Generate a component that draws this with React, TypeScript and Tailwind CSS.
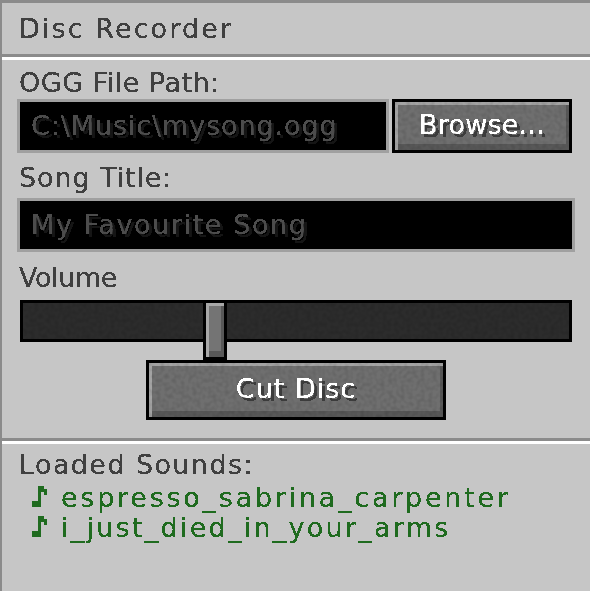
const font = "font-['DejaVu_Sans',sans-serif] text-[27px] leading-[30px] whitespace-pre [filter:url(#crisp)]"

function Grain() {
  return (
    <svg className="absolute inset-0 h-full w-full" aria-hidden="true">
      <filter id="grain">
        <feTurbulence type="fractalNoise" baseFrequency="0.25" numOctaves="1" seed="4" />
        <feColorMatrix values="0 0 0 0 0  0 0 0 0 0  0 0 0 0 0  1.6 0 0 0 -0.62" />
      </filter>
      <rect width="100%" height="100%" filter="url(#grain)" opacity="0.16" />
    </svg>
  )
}

function Note() {
  return (
    <svg width="15" height="21" viewBox="0 0 5 7" className="mt-[3px] shrink-0" fill="#1f6b1f" shapeRendering="crispEdges" aria-hidden="true">
      <path d="M2 0h2v1h1v2H4V2H3v5H0V5h2z" />
    </svg>
  )
}

function McButton({ label, tracking, className }: { label: string; tracking: string; className: string }) {
  return (
    <div className={`relative border-[3px] border-black bg-[#6f6f6f] shadow-[inset_3px_3px_0_#a3a3a3,inset_-3px_-6px_0_#585858] ${className}`}>
      <Grain />
      <div className="relative flex h-full items-center justify-center pb-[3px]">
        <span className={`${font} ${tracking} text-white [text-shadow:3px_3px_0_#3c3c3c]`}>{label}</span>
      </div>
    </div>
  )
}

function TextField({ value, className, tracking }: { value: string; className: string; tracking: string }) {
  return (
    <div className={`flex h-[54px] items-center overflow-hidden border-[3px] border-[#a0a0a0] bg-black pl-[11px] ${className}`}>
      <span className={`${font} ${tracking} text-[#4c4c4c] [text-shadow:3px_3px_0_#151515]`}>{value}</span>
    </div>
  )
}

export default function App() {
  return (
    <div className="h-[592px] w-[593px] bg-white">
      <svg className="absolute h-0 w-0" aria-hidden="true">
        {/* hard edge on the text, the original font is a bitmap one */}
        <filter id="crisp" colorInterpolationFilters="sRGB">
          <feComponentTransfer>
            <feFuncA type="discrete" tableValues="0 1 1" />
          </feComponentTransfer>
        </filter>
      </svg>
      <div className="flex h-[591px] w-[590px] flex-col border-t-[3px] border-l-2 border-[#8b8b8b] bg-[#c6c6c6]">
        {/* Title */}
        <div className="h-[54px] shrink-0 border-b-[3px] border-[#8b8b8b] pt-[11px] pl-[17px]">
          <div className={`${font} tracking-[2.1px] text-[#404040]`}>Disc Recorder</div>
        </div>
        <div className="h-[3px] shrink-0 bg-white" />

        {/* Form */}
        <div className="relative h-[378px] shrink-0 pl-[15px]">
          <div className={`${font} mt-[8px] h-[31px] pl-[2px] tracking-[0.5px] text-[#404040]`}>OGG File Path:</div>
          <div className="flex gap-[3px]">
            <TextField value="C:\Music\mysong.ogg" className="w-[372px]" tracking="tracking-[0.9px]" />
            <McButton label="Browse..." tracking="tracking-[0.2px]" className="h-[54px] w-[180px]" />
          </div>
          <div className={`${font} mt-[10px] pl-[2px] tracking-[0.9px] text-[#404040]`}>Song Title:</div>
          <div className="mt-[5px]">
            <TextField value="My Favourite Song" className="w-[558px]" tracking="tracking-[1.6px]" />
          </div>
          <div className={`${font} mt-[11px] h-[29px] pl-[2px] tracking-[-0.4px] text-[#404040]`}>Volume</div>
          <div className="relative mt-[8px] ml-[3px] h-[42px] w-[552px] border-[3px] border-black bg-[#2c2c2c]">
            <Grain />
            {/* Slider handle */}
            <div className="absolute top-[-3px] left-[180px] z-10 h-[60px] w-[24px] border-[3px] border-black bg-[#747474] shadow-[inset_3px_3px_0_#a8a8a8,inset_-3px_-6px_0_#585858]" />
          </div>
          <McButton label="Cut Disc" tracking="tracking-[1px]" className="mt-[18px] ml-[129px] h-[60px] w-[300px]" />
        </div>

        {/* Loaded sounds */}
        <div className="h-[3px] shrink-0 bg-[#8b8b8b]" />
        <div className="h-[3px] shrink-0 bg-white" />
        <div className="pt-[6px] pl-[17px]">
          <div className={`${font} tracking-[1.4px] text-[#404040]`}>Loaded Sounds:</div>
          <div className="mt-[3px] flex flex-col pl-[13px]">
            <div className="flex h-[30px] items-start gap-[14px]">
              <Note />
              <span className={`${font} tracking-[2.75px] text-[#1f6b1f]`}>espresso_sabrina_carpenter</span>
            </div>
            <div className="flex h-[30px] items-start gap-[14px]">
              <Note />
              <span className={`${font} tracking-[2.25px] text-[#1f6b1f]`}>i_just_died_in_your_arms</span>
            </div>
          </div>
        </div>
      </div>
    </div>
  )
}
